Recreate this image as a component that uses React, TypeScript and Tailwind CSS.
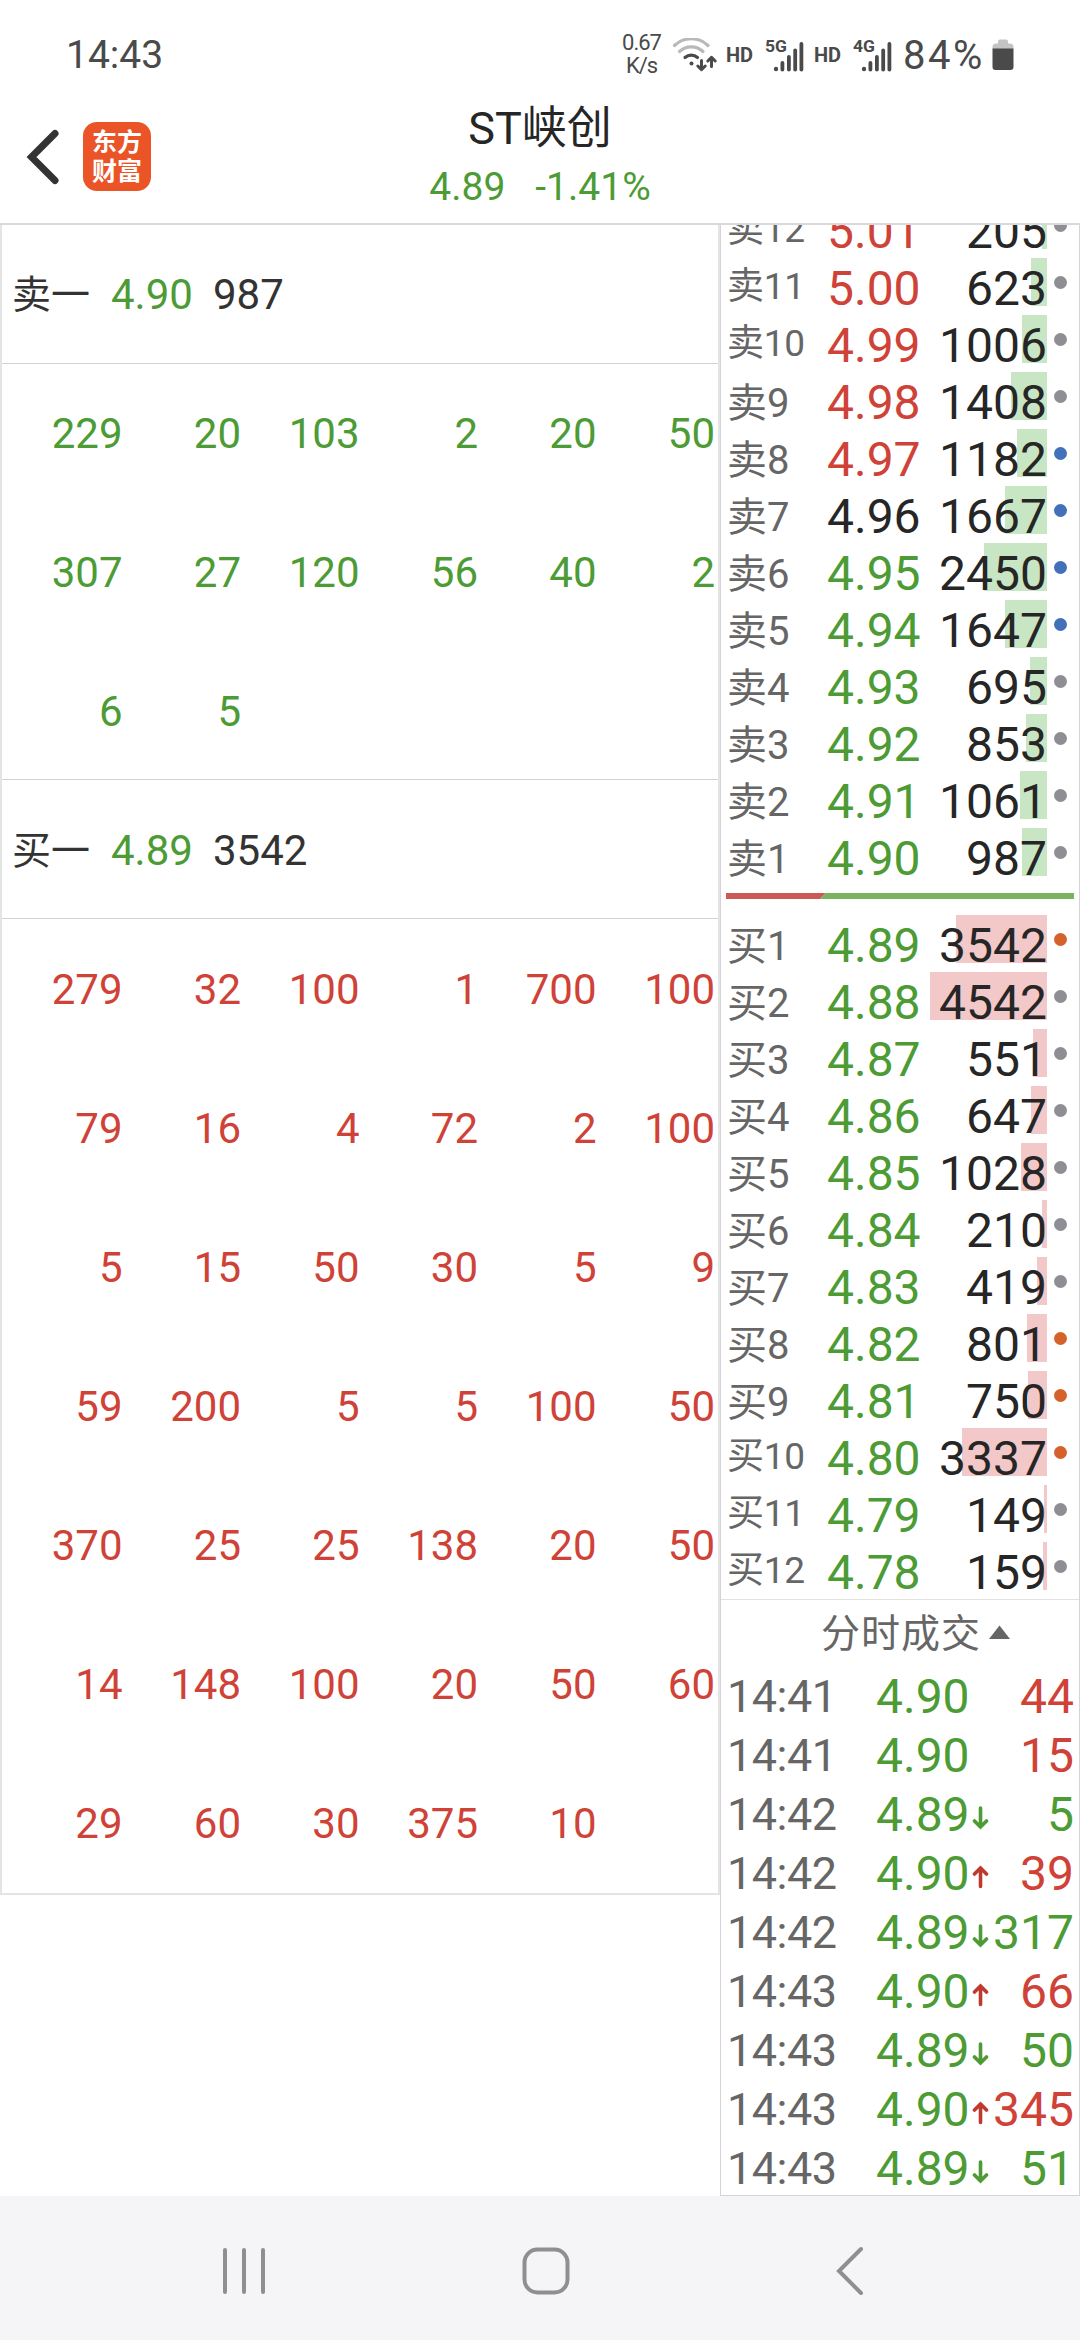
import clsx from 'clsx';

type Tone = 'red' | 'green' | 'black';
type Dot = 'gray' | 'blue' | 'orange';

interface Level {
    label: string;
    price: string;
    volume: number;
    tone: Tone;
    dot: Dot;
}

interface Trade {
    time: string;
    price: string;
    dir?: 'up' | 'down';
    volume: number;
    tone: Tone;
}

const toneClass: Record<Tone, string> = {
    red: 'text-[#cf4238]',
    green: 'text-[#4c9b35]',
    black: 'text-[#262626]',
};

const dotClass: Record<Dot, string> = {
    gray: 'bg-[#8e8e95]',
    blue: 'bg-[#4270b9]',
    orange: 'bg-[#d6622b]',
};

const sells: Level[] = [
    { label: '卖12', price: '5.01', volume: 205, tone: 'red', dot: 'gray' },
    { label: '卖11', price: '5.00', volume: 623, tone: 'red', dot: 'gray' },
    { label: '卖10', price: '4.99', volume: 1006, tone: 'red', dot: 'gray' },
    { label: '卖9', price: '4.98', volume: 1408, tone: 'red', dot: 'gray' },
    { label: '卖8', price: '4.97', volume: 1182, tone: 'red', dot: 'blue' },
    { label: '卖7', price: '4.96', volume: 1667, tone: 'black', dot: 'blue' },
    { label: '卖6', price: '4.95', volume: 2450, tone: 'green', dot: 'blue' },
    { label: '卖5', price: '4.94', volume: 1647, tone: 'green', dot: 'blue' },
    { label: '卖4', price: '4.93', volume: 695, tone: 'green', dot: 'gray' },
    { label: '卖3', price: '4.92', volume: 853, tone: 'green', dot: 'gray' },
    { label: '卖2', price: '4.91', volume: 1061, tone: 'green', dot: 'gray' },
    { label: '卖1', price: '4.90', volume: 987, tone: 'green', dot: 'gray' },
];

const buys: Level[] = [
    { label: '买1', price: '4.89', volume: 3542, tone: 'green', dot: 'orange' },
    { label: '买2', price: '4.88', volume: 4542, tone: 'green', dot: 'gray' },
    { label: '买3', price: '4.87', volume: 551, tone: 'green', dot: 'gray' },
    { label: '买4', price: '4.86', volume: 647, tone: 'green', dot: 'gray' },
    { label: '买5', price: '4.85', volume: 1028, tone: 'green', dot: 'gray' },
    { label: '买6', price: '4.84', volume: 210, tone: 'green', dot: 'gray' },
    { label: '买7', price: '4.83', volume: 419, tone: 'green', dot: 'gray' },
    { label: '买8', price: '4.82', volume: 801, tone: 'green', dot: 'orange' },
    { label: '买9', price: '4.81', volume: 750, tone: 'green', dot: 'orange' },
    { label: '买10', price: '4.80', volume: 3337, tone: 'green', dot: 'orange' },
    { label: '买11', price: '4.79', volume: 149, tone: 'green', dot: 'gray' },
    { label: '买12', price: '4.78', volume: 159, tone: 'green', dot: 'gray' },
];

const trades: Trade[] = [
    { time: '14:41', price: '4.90', volume: 44, tone: 'red' },
    { time: '14:41', price: '4.90', volume: 15, tone: 'red' },
    { time: '14:42', price: '4.89', dir: 'down', volume: 5, tone: 'green' },
    { time: '14:42', price: '4.90', dir: 'up', volume: 39, tone: 'red' },
    { time: '14:42', price: '4.89', dir: 'down', volume: 317, tone: 'green' },
    { time: '14:43', price: '4.90', dir: 'up', volume: 66, tone: 'red' },
    { time: '14:43', price: '4.89', dir: 'down', volume: 50, tone: 'green' },
    { time: '14:43', price: '4.90', dir: 'up', volume: 345, tone: 'red' },
    { time: '14:43', price: '4.89', dir: 'down', volume: 51, tone: 'green' },
];

const sellOrders = [229, 20, 103, 2, 20, 50, 307, 27, 120, 56, 40, 2, 6, 5];

const buyOrders = [
    279, 32, 100, 1, 700, 100,
    79, 16, 4, 72, 2, 100,
    5, 15, 50, 30, 5, 9,
    59, 200, 5, 5, 100, 50,
    370, 25, 25, 138, 20, 50,
    14, 148, 100, 20, 50, 60,
    29, 60, 30, 375, 10,
];

// The longest bar is 117px and stands for the largest volume in the book
const maxVolume = Math.max(...[...sells, ...buys].map((l) => l.volume));
const barWidth = (volume: number) => Math.floor((volume / maxVolume) * 117);

const Signal = ({ label }: { label: string }) => (
    <svg width="40" height="42" viewBox="0 -8 40 42" fill="#4a4a4a">
        <text x="0" y="13.5" fontSize="17" fontWeight="700" textLength="22" lengthAdjust="spacingAndGlyphs">{label}</text>
        <circle cx="11" cy="31" r="2.2" />
        <rect x="15.5" y="23" width="3.8" height="10.5" rx="1.9" />
        <rect x="22" y="17" width="3.8" height="16.5" rx="1.9" />
        <rect x="28.3" y="10.5" width="3.8" height="23" rx="1.9" />
        <rect x="34.5" y="4" width="3.8" height="29.5" rx="1.9" />
    </svg>
);

const StatusBar = () => (
    <div className="flex h-[110px] pl-[66px] text-[#4a4a4a]">
        <div className="w-[554px] text-[39px] leading-[111px]">14:43</div>
        <div className="mt-[31px] w-[43px] text-center text-[22px] leading-[23px] tracking-[-1px]">
            <div>0.67</div>
            <div>K/s</div>
        </div>
        <svg className="mt-[38px] ml-[9px]" width="48" height="36" viewBox="0 0 48 36" fill="none" strokeLinecap="round">
            <path d="M2.500 7.500a24 24 0 0 1 33.500 0" stroke="#b9b9b9" strokeWidth="3.2" />
            <path d="M7.500 13.500a17 17 0 0 1 23.500 0" stroke="#b9b9b9" strokeWidth="3.2" />
            <path d="M13 19.500a9.500 9.500 0 0 1 12.500 0" stroke="#4a4a4a" strokeWidth="3.2" />
            <circle cx="19.5" cy="25.5" r="2" fill="#4a4a4a" />
            <path d="M29.500 22.500v9M25.800 28l3.700 3.700 3.700-3.700M39.500 28.500v-9M35.800 23l3.700-3.700 3.700 3.700" stroke="#4a4a4a" strokeWidth="3" strokeLinejoin="round" />
        </svg>
        <div className="ml-[6px] w-[39px] text-[20px] leading-[110px] font-bold">HD</div>
        <div className="mt-[30px] w-[40px]"><Signal label="5G" /></div>
        <div className="ml-[9px] w-[39px] text-[20px] leading-[110px] font-bold">HD</div>
        <div className="mt-[30px] w-[40px]"><Signal label="4G" /></div>
        <div className="ml-[10px] w-[89px] text-[40px] leading-[111px] tracking-[2.500px]">84%</div>
        <svg className="mt-[39px]" width="22" height="32" viewBox="0 0 22 32">
            <path d="M0.500 10V8a3.500 3.500 0 0 1 3.500-3.500h2V2.500a2 2 0 0 1 2-2h6a2 2 0 0 1 2 2V4.500h2A3.500 3.500 0 0 1 21.500 8v2z" fill="#c4c4c4" />
            <path d="M0.500 9.500h21V28a3 3 0 0 1-3 3h-15a3 3 0 0 1-3-3z" fill="#4a4a4a" />
        </svg>
    </div>
);

const Header = () => (
    <header className="grid h-[115px] grid-cols-3 border-b-2 border-[#d9d9d9]">
        <div className="flex pl-[26px]">
            <svg className="mt-[19px]" width="34" height="56" viewBox="0 0 34 56" fill="none" stroke="#333" strokeWidth="7" strokeLinecap="round" strokeLinejoin="miter">
                <path d="M29 4.500L5.500 28 29 51.500" />
            </svg>
            <div className="mt-[12px] ml-[23px] flex h-[69px] w-[68px] flex-col items-center justify-center rounded-[14px] bg-[#ea5427] text-[25px] leading-[29px] font-bold text-white">
                <span>东方</span>
                <span>财富</span>
            </div>
        </div>
        <div className="flex flex-col items-center">
            <div className="h-[60px] text-[45px] leading-[38px] text-[#262626]">ST峡创</div>
            <div className="flex gap-[30px] text-[39px] leading-[34px] text-[#4c9b35]">
                <span>4.89</span>
                <span>-1.41%</span>
            </div>
        </div>
    </header>
);

const OrderHead = ({ name, price, volume, className }: { name: string; price: string; volume: number; className: string }) => (
    <div className={clsx('flex h-[139px] border-b border-[#d2d2d2] pl-[10px] text-[42px] text-[#333]', className)}>
        <span className="w-[99px] text-[39px]">{name}</span>
        <span className="w-[102px] text-[#4c9b35]">{price}</span>
        <span>{volume}</span>
    </div>
);

const OrderGrid = ({ orders, tone, className }: { orders: number[]; tone: Tone; className: string }) => (
    <div className={clsx('grid auto-rows-[139px] grid-cols-6 pr-[3px] pl-[2px] text-right text-[42px] leading-[140px]', toneClass[tone], className)}>
        {orders.map((n, i) => (
            <span key={i}>{n}</span>
        ))}
    </div>
);

const LevelRow = ({ level, side }: { level: Level; side: 'sell' | 'buy' }) => (
    <div className="flex h-[57px] items-start pl-[6px]">
        <span
            className={clsx(
                'w-[100px] text-[#666]',
                level.label.length > 2 ? 'text-[37px] leading-[57px] tracking-[-0.3px]' : 'text-[40px] leading-[63px]'
            )}
        >
            {level.label}
        </span>
        <span className={clsx('w-[92px] text-[48px] leading-[61px]', toneClass[level.tone])}>{level.price}</span>
        <div className="relative h-[48px] w-[128px] text-right text-[48px] leading-[61px] text-[#262626]">
            <div
                className={clsx('absolute top-0 right-0 h-full', side === 'sell' ? 'bg-[#c9e6c4]' : 'bg-[#f2c9c8]')}
                style={{ width: barWidth(level.volume) }}
            />
            <span className="relative">{level.volume}</span>
        </div>
        <i className={clsx('mt-[18px] ml-[7px] size-[13px] rounded-full', dotClass[level.dot])} />
    </div>
);

const TradeRow = ({ trade }: { trade: Trade }) => (
    <div className="flex h-[59px] pl-[6px] leading-[59px]">
        <span className="w-[149px] text-[45px] tracking-[-0.5px] text-[#666]">{trade.time}</span>
        <span className="w-[96px] text-[48px] text-[#4c9b35]">{trade.price}</span>
        <span className="w-[17px] pt-[21px]">
            {trade.dir && (
                <svg
                    width="17"
                    height="24"
                    viewBox="0 0 17 24"
                    fill="none"
                    strokeWidth="3.6"
                    strokeLinecap="round"
                    className={trade.dir === 'up' ? 'stroke-[#c0392f]' : 'stroke-[#4c9b35]'}
                >
                    <path d={trade.dir === 'up' ? 'M8.500 21.500V3M2.500 9L8.500 3l6 6' : 'M8.500 2v19M2.500 15l6 6 6-6'} />
                </svg>
            )}
        </span>
        <span className={clsx('w-[85px] text-right text-[48px]', toneClass[trade.tone])}>{trade.volume}</span>
    </div>
);

const NavBar = () => (
    <nav className="flex h-[144px] bg-[#f5f5f8] pt-[50px]">
        <svg className="ml-[220px]" width="48" height="50" viewBox="0 0 48 50" stroke="#8f8f8f" strokeWidth="4" strokeLinecap="round">
            <path d="M5 4v42M24 4v42M43 4v42" />
        </svg>
        <svg className="ml-[253px]" width="50" height="50" viewBox="0 0 50 50" fill="none" stroke="#8f8f8f" strokeWidth="4">
            <rect x="3.5" y="3.5" width="43" height="43" rx="13" />
        </svg>
        <svg className="ml-[262px]" width="34" height="50" viewBox="0 0 34 50" fill="none" stroke="#8f8f8f" strokeWidth="4" strokeLinecap="round">
            <path d="M28 3L6 25l22 22" />
        </svg>
    </nav>
);

export default function App() {
    return (
        <div className="flex h-[2340px] w-[1080px] flex-col overflow-hidden bg-white font-[Roboto,'Noto_Sans_CJK_SC',sans-serif] whitespace-nowrap" lang="zh-CN">
            <StatusBar />
            <Header />
            <main className="flex h-[1971px]">
                <section className="h-[1670px] w-[720px] overflow-hidden border-x-2 border-b-2 border-[#e4e4e4]">
                    <OrderHead name="卖一" price="4.90" volume={987} className="leading-[140px]" />
                    <OrderGrid orders={sellOrders} tone="green" className="h-[416px] border-b border-[#d2d2d2]" />
                    <OrderHead name="买一" price="4.89" volume={3542} className="leading-[142px]" />
                    <OrderGrid orders={buyOrders} tone="red" className="pt-px" />
                </section>
                <section className="w-[360px] overflow-hidden border-x border-b border-[#d4d4d8]">
                    <div className="-mt-[24px]">
                        {sells.map((l) => (
                            <LevelRow key={l.label} level={l} side="sell" />
                        ))}
                    </div>
                    <svg className="mt-[8px] ml-[5px]" width="348" height="6" viewBox="0 0 348 6">
                        <path d="M0 0h100l-6 6H0z" fill="#cb5a54" />
                        <path d="M100 0h248v6H94z" fill="#79b35f" />
                    </svg>
                    <div className="mt-[16px]">
                        {buys.map((l) => (
                            <LevelRow key={l.label} level={l} side="buy" />
                        ))}
                    </div>
                    <div className="flex h-[68px] border-t border-[#e2e2e2] pl-[100px] text-[39px] leading-[68px] tracking-[1px] text-[#666]">
                        分时成交
                        <svg className="mt-[25px] ml-[8px]" width="21" height="14" viewBox="0 0 21 14" fill="#666">
                            <path d="M10.500 0.500L21 14H0z" />
                        </svg>
                    </div>
                    {trades.map((t, i) => (
                        <TradeRow key={i} trade={t} />
                    ))}
                </section>
            </main>
            <NavBar />
        </div>
    );
}
